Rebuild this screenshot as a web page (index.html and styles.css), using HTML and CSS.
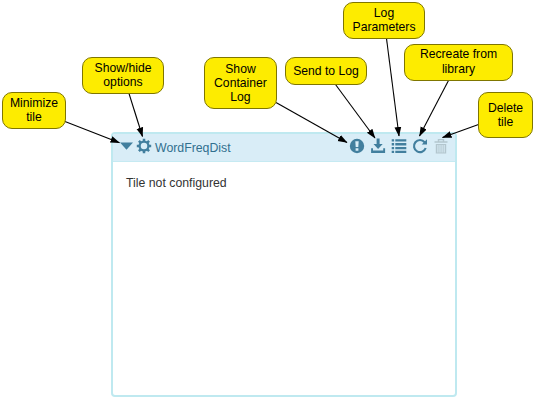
FILE: index.html
```
<!DOCTYPE html>
<html lang="en">
<head>
<meta charset="utf-8">
<title>WordFreqDist tile</title>
<link rel="stylesheet" href="styles.css">
</head>
<body>
<main class="canvas">
  <section class="tile">
    <header class="tile-header">
      <svg class="icon caret" viewBox="0 0 13 8"><path d="M0 .5h13L6.500 7.700z"/></svg>
      <svg class="icon gear" viewBox="0 0 16 16"><circle cx="8" cy="8" r="4.400" fill="none" stroke="currentColor" stroke-width="2.300"/><path d="M8 .8v3M8 12.200v3M.8 8h3M12.200 8h3M2.900 2.900l2 2M11.100 11.100l2 2M2.900 13.100l2-2M11.100 4.900l2-2" fill="none" stroke="currentColor" stroke-width="2.500"/></svg>
      <h1 class="title">WordFreqDist</h1>
      <div class="actions">
        <svg class="icon" viewBox="0 0 16 16"><circle cx="8" cy="8" r="7.200"/><path class="cut" d="M6.300 3.200h3.400L9.300 9H6.700zM6.600 10.200h2.800v2.500H6.600z"/></svg>
        <svg class="icon" viewBox="0 0 16 16"><path d="M6.600.6h3v5.400h3.100L8.100 11 3.500 6h3.100zM1.100 10.300h1.900v2.200h10.200v-2.200h1.900V15h-14z"/></svg>
        <svg class="icon" viewBox="0 0 16 16"><path d="M.7 1.300h2.400v2.300H.7zM4.300 1.300h11v2.300h-11zM.7 5.100h2.400v2.300H.7zM4.300 5.100h11v2.300h-11zM.7 8.900h2.400v2.300H.7zM4.300 8.900h11v2.300h-11zM.7 12.700h2.400V15H.7zM4.300 12.700h11V15h-11z"/></svg>
        <svg class="icon" viewBox="0 0 16 16"><path d="M12.600 4.200A6 6 0 1 0 13.700 10" fill="none" stroke="currentColor" stroke-width="2.100"/><path d="M15 1.200v5.300H9.700z"/></svg>
        <svg class="icon trash" viewBox="0 0 16 16"><path d="M1.500 4h13M5.500 4V1.600h5V4" fill="none" stroke="currentColor" stroke-width="1.400"/><path d="M2.800 6h10.400v9.600H2.800zM4.400 7v7.400h1V7zM6.500 7v7.400h1V7zM8.600 7v7.400h1V7zM10.700 7v7.400h1V7z" fill-rule="evenodd"/></svg>
      </div>
    </header>
    <p class="tile-body">Tile not configured</p>
  </section>

  <svg class="arrows" viewBox="0 0 535 409">
    <defs>
      <marker id="head" markerWidth="10" markerHeight="9" refX="9" refY="4" orient="auto" markerUnits="userSpaceOnUse"><path d="M0 .6L9.500 4 0 7.400z"/></marker>
    </defs>
    <path d="M65 121.500L119.500 142.700"/>
    <path d="M129 93.500L142.500 136.500"/>
    <path d="M276 102.500L347 142.500"/>
    <path d="M335.500 84.500L375 138"/>
    <path d="M386.500 38.500L399 136"/>
    <path d="M448.500 80.500L419.500 136"/>
    <path d="M478.500 124.500L442.500 137.500"/>
  </svg>

  <div class="note minimize">Minimize<br>tile</div>
  <div class="note options">Show/hide<br>options</div>
  <div class="note container-log">Show<br>Container<br>Log</div>
  <div class="note send">Send to Log</div>
  <div class="note parameters">Log<br>Parameters</div>
  <div class="note recreate">Recreate from<br>library</div>
  <div class="note delete">Delete<br>tile</div>
</main>
</body>
</html>
```
FILE: styles.css
```
* { box-sizing: border-box; }
body { margin: 0; background: #fff; font-family: "Liberation Sans", Arial, sans-serif; }
.canvas { position: relative; width: 535px; height: 409px; padding: 132px 0 0 111px; overflow: hidden; }
.tile { width: 346px; height: 265px; border: 2px solid #bfe9f0; border-radius: 4px; background: #fff; overflow: hidden; }
.tile-header { display: flex; align-items: center; height: 28px; padding: 0 6px 3px 7px; background: #d9edf7; border-bottom: 1px solid #c6eaf2; color: #427f9e; }
.icon { width: 16px; height: 16px; flex: none; fill: currentColor; }
.caret { width: 13px; height: 8px; margin-right: 3px; }
.title { margin: 3px 0 0 3px; font-size: 12.3px; line-height: 14px; font-weight: 400; color: #31708f; }
.actions { display: flex; gap: 5px; margin-left: auto; }
.cut { fill: #d9edf7; }
.trash { color: #b3c6ce; }
.tile-body { margin: 13px 13px; font-size: 12.3px; line-height: 16px; color: #333; }
.arrows { position: absolute; inset: 0; width: 535px; height: 409px; }
.arrows > path { fill: none; stroke: #000; stroke-width: 1.1; marker-end: url(#head); }
.note { position: absolute; display: flex; align-items: center; justify-content: center; padding-bottom: 2px; text-align: center; background: #fdec00; border: 1px solid #7f7600; border-radius: 10px; font-size: 12.2px; line-height: 14px; color: #000; white-space: nowrap; }
.minimize { left: 2px; top: 92px; width: 64px; height: 37px; }
.options { left: 82px; top: 57px; width: 82px; height: 37px; }
.container-log { left: 204px; top: 57px; width: 73px; height: 52px; padding-bottom: 0; }
.send { left: 285px; top: 57px; width: 82px; height: 28px; padding-bottom: 0; }
.parameters { left: 343px; top: 2px; width: 82px; height: 37px; }
.recreate { left: 404px; top: 44px; width: 109px; height: 37px; line-height: 15px; }
.delete { left: 478px; top: 92px; width: 55px; height: 46px; padding-bottom: 0; }
```
